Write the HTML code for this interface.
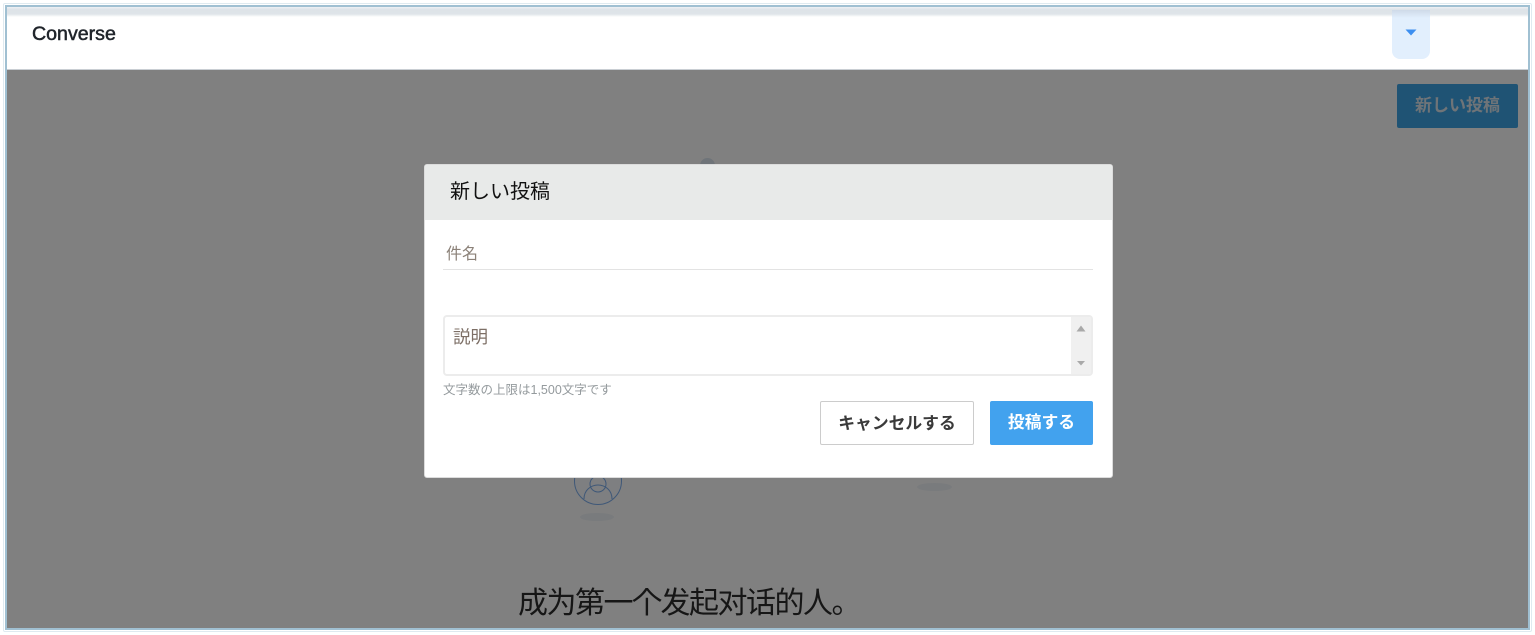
<!DOCTYPE html>
<html lang="ja">
<head>
<meta charset="utf-8">
<title>Converse</title>
<style>
html,body{margin:0;padding:0;width:1535px;height:635px;overflow:hidden;background:#fff}
body{position:relative;font-family:"Liberation Sans","Noto Sans CJK JP",sans-serif}
div,span{position:absolute;box-sizing:border-box;white-space:nowrap}
.glow{left:3px;top:3px;width:1529px;height:629px;border:1px solid #dfeaf0;border-radius:2px}
.frame{left:5px;top:5px;width:1525px;height:625px;border:2px solid #a0c0d2;overflow:hidden;background:#808080}
.top{left:0;top:0;width:1521px;height:63px;background:#fff}
.shade{left:0;top:0;width:1521px;height:10px;background:linear-gradient(#eef1f4 0,#dde3e8 25%,#dfe4e9 70%,#ffffff 100%)}
.line{left:0;top:62px;width:1521px;height:1px;background:#c9ced3}
.conv{left:25px;top:15px;font-size:19.6px;line-height:24px;color:#20252b;-webkit-text-stroke:.5px #20252b}
.tab{left:1385px;top:3px;width:38px;height:49px;background:#e2effd;border-radius:0 0 8px 8px}
.tabshade{left:1385px;top:3px;width:38px;height:8px;background:linear-gradient(rgba(190,200,215,.55),rgba(226,239,253,0))}
.newbtn{left:1390px;top:77px;width:121px;height:44px;background:#1f5374;border-radius:2px;color:#6f7478;font-weight:700;font-size:17px;line-height:44px;text-align:center}
.big{left:511px;top:575px;font-size:30px;line-height:44px;color:#161616;font-family:"Liberation Sans","Noto Sans CJK SC",sans-serif;font-weight:400;letter-spacing:-1.5px}
.blob{background:#797b7d;border-radius:50%}
.modal{left:417px;top:157px;width:689px;height:314px;background:#fff;border:1px solid #dcdcdc;border-radius:3px;overflow:hidden}
.mhead{left:0;top:0;width:687px;height:55px;background:#e8eae9}
.mtitle{left:25px;top:13px;font-size:20px;line-height:28px;color:#111}
.sub{left:21px;top:79px;font-size:16px;line-height:22px;color:#8b8178}
.subline{left:18px;top:104px;width:650px;height:1px;background:#e3e3e3}
.ta{left:18px;top:150px;width:650px;height:61px;border:2px solid #ececec;border-radius:4px;background:#fff;overflow:hidden}
.ph{left:28px;top:160px;font-size:17.5px;line-height:24px;color:#7d6f66}
.sb{right:0;top:0;width:20px;height:58px;background:#f0f0f0}
.hint{left:18px;top:216px;font-size:12.5px;line-height:18px;color:#949a9d;letter-spacing:0}
.cancel{left:395px;top:236px;width:154px;height:44px;background:#fff;border:1px solid #ccc;border-radius:2px;font-size:16.8px;font-weight:700;color:#3a3a3a;line-height:43px;text-align:center}
.post{left:565px;top:236px;width:103px;height:44px;background:#42a2ee;border-radius:2px;font-size:16.8px;font-weight:700;color:#fff;line-height:44px;text-align:center}
</style>
</head>
<body>
<div class="glow"></div>
<div class="frame">
  <div class="top"></div>
  <div class="shade"></div>
  <div class="line"></div>
  <div class="conv">Converse</div>
  <div class="tab"></div>
  <div class="tabshade"></div>
  <svg style="position:absolute;left:1398px;top:22px" width="12" height="7" viewBox="0 0 12 7"><path d="M0.5 0.5H11.5L6 6.5Z" fill="#3d8ff0"/></svg>
  <div class="newbtn">新しい投稿</div>

  <div class="blob" style="left:693px;top:151px;width:15px;height:15px;background:#6f7479"></div>
  <svg style="position:absolute;left:566px;top:449px" width="50" height="50" viewBox="0 0 50 50">
    <circle cx="25" cy="25" r="23.5" fill="#7e7f81" stroke="#3f5878" stroke-width="1"/>
    <circle cx="25" cy="28" r="8" fill="none" stroke="#3f5878" stroke-width="1"/>
    <path d="M11 43C11 34 18 29 25 29C32 29 39 34 39 43" fill="none" stroke="#3f5878" stroke-width="1"/>
  </svg>
  <div class="blob" style="left:573px;top:506px;width:34px;height:8px"></div>
  <div class="blob" style="left:910px;top:476px;width:35px;height:8px"></div>
  <div class="big">成为第一个发起对话的人。</div>

  <div class="modal">
    <div class="mhead"></div>
    <div class="mtitle">新しい投稿</div>
    <div class="sub">件名</div>
    <div class="subline"></div>
    <div class="ta">
      <div class="sb"></div>
      <svg style="position:absolute;right:5px;top:8px" width="10" height="7" viewBox="0 0 10 7"><path d="M0.5 6.5H9.5L5 0.5Z" fill="#a9a9a9"/></svg>
      <svg style="position:absolute;right:6px;top:44px" width="8" height="5" viewBox="0 0 8 5"><path d="M0 0H8L4 4.5Z" fill="#a9a9a9"/></svg>
    </div>
    <div class="ph">説明</div>
    <div class="hint">文字数の上限は1,500文字です</div>
    <div class="cancel">キャンセルする</div>
    <div class="post">投稿する</div>
  </div>
</div>
</body>
</html>
